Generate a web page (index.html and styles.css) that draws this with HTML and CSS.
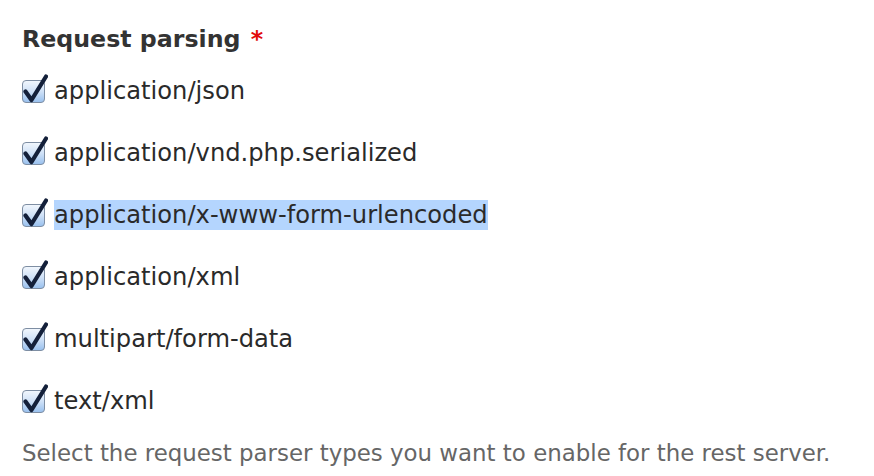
FILE: index.html
```html
<!DOCTYPE html>
<html>
<head>
<meta charset="utf-8">
<link rel="stylesheet" href="styles.css">
</head>
<body>
<div class="field">
  <h2 class="title">Request parsing <span class="req">*</span></h2>
  <ul class="options">
    <li class="opt"><svg class="cb" viewBox="0 0 28 30" width="28" height="30"><defs><linearGradient id="g" x1="0" y1="0" x2="0" y2="1"><stop offset="0" stop-color="#f2f7fd"/><stop offset="0.5" stop-color="#cfe1f7"/><stop offset="1" stop-color="#98c0ee"/></linearGradient></defs><rect x="2.5" y="6.5" width="22" height="22" rx="3.5" fill="url(#g)" stroke="#7e8ea3"/><path d="M5.5 17.5 L11.5 26 L26 2.5" fill="none" stroke="#14203a" stroke-width="4.2" stroke-linecap="round" stroke-linejoin="round"/></svg><span class="label">application/json</span></li>
    <li class="opt"><svg class="cb" viewBox="0 0 28 30" width="28" height="30"><rect x="2.5" y="6.5" width="22" height="22" rx="3.5" fill="url(#g)" stroke="#7e8ea3"/><path d="M5.5 17.5 L11.5 26 L26 2.5" fill="none" stroke="#14203a" stroke-width="4.2" stroke-linecap="round" stroke-linejoin="round"/></svg><span class="label">application/vnd.php.serialized</span></li>
    <li class="opt"><svg class="cb" viewBox="0 0 28 30" width="28" height="30"><rect x="2.5" y="6.5" width="22" height="22" rx="3.5" fill="url(#g)" stroke="#7e8ea3"/><path d="M5.5 17.5 L11.5 26 L26 2.5" fill="none" stroke="#14203a" stroke-width="4.2" stroke-linecap="round" stroke-linejoin="round"/></svg><span class="label selected">application/x-www-form-urlencoded</span></li>
    <li class="opt"><svg class="cb" viewBox="0 0 28 30" width="28" height="30"><rect x="2.5" y="6.5" width="22" height="22" rx="3.5" fill="url(#g)" stroke="#7e8ea3"/><path d="M5.5 17.5 L11.5 26 L26 2.5" fill="none" stroke="#14203a" stroke-width="4.2" stroke-linecap="round" stroke-linejoin="round"/></svg><span class="label">application/xml</span></li>
    <li class="opt"><svg class="cb" viewBox="0 0 28 30" width="28" height="30"><rect x="2.5" y="6.5" width="22" height="22" rx="3.5" fill="url(#g)" stroke="#7e8ea3"/><path d="M5.5 17.5 L11.5 26 L26 2.5" fill="none" stroke="#14203a" stroke-width="4.2" stroke-linecap="round" stroke-linejoin="round"/></svg><span class="label">multipart/form-data</span></li>
    <li class="opt"><svg class="cb" viewBox="0 0 28 30" width="28" height="30"><rect x="2.5" y="6.5" width="22" height="22" rx="3.5" fill="url(#g)" stroke="#7e8ea3"/><path d="M5.5 17.5 L11.5 26 L26 2.5" fill="none" stroke="#14203a" stroke-width="4.2" stroke-linecap="round" stroke-linejoin="round"/></svg><span class="label">text/xml</span></li>
  </ul>
  <p class="desc">Select the request parser types you want to enable for the rest server.</p>
</div>
</body>
</html>
```

FILE: styles.css
```css
html, body {
  margin: 0;
  padding: 0;
  background: #ffffff;
}
body {
  font-family: "DejaVu Sans", "Liberation Sans", sans-serif;
  color: #2b2b2b;
}
.field {
  padding: 22px 0 0 20px;
}
.title {
  margin: 0 0 0 2px;
  font-size: 23.7px;
  font-weight: bold;
  color: #333333;
  line-height: 34px;
}
.req {
  color: #e20a0a;
  margin-left: 2px;
}
.options {
  list-style: none;
  margin: 20px 0 0 0;
  padding: 0;
  display: flex;
  flex-direction: column;
  gap: 32px;
}
.opt {
  display: flex;
  align-items: center;
  gap: 6px;
  height: 30px;
}
.cb {
  flex: none;
  display: block;
  margin-top: -4px;
}
.label {
  font-size: 24.2px;
  line-height: 30px;
  color: #2a2a2a;
}
.selected {
  background: #b4d5fe;
}
.desc {
  margin: 22px 0 0 2px;
  font-size: 22.9px;
  line-height: 30px;
  color: #666666;
}
```
